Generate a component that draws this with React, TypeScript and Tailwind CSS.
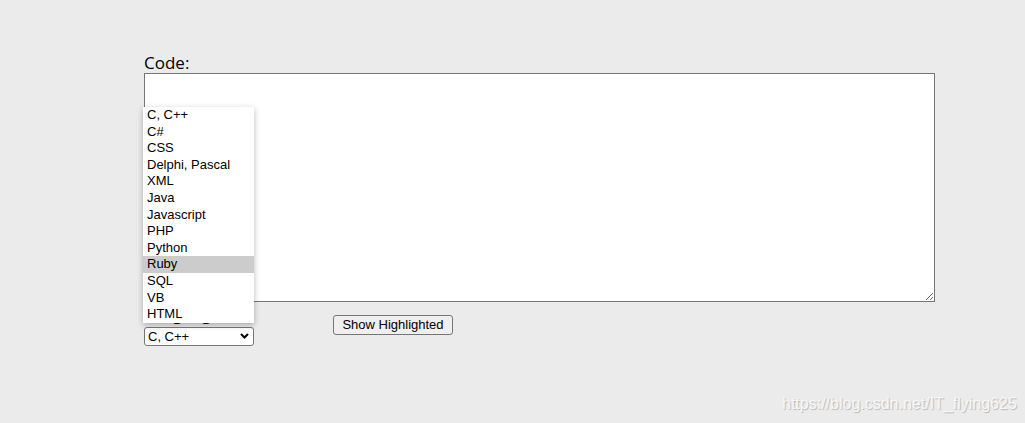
import React from "react";

const langs = [
  "C, C++",
  "C#",
  "CSS",
  "Delphi, Pascal",
  "XML",
  "Java",
  "Javascript",
  "PHP",
  "Python",
  "Ruby",
  "SQL",
  "VB",
  "HTML",
];

export default function App() {
  return (
    <div className="relative w-full min-h-[423px] overflow-hidden bg-[#ebebeb] text-black">
      <div className="relative pl-[144px] pt-[52px]">
        <label className="block text-[17px] leading-[21px] font-['Open_Sans',sans-serif]">
          Code:
        </label>
        <textarea className="block w-[791px] h-[229px] border border-[#767676] bg-white outline-none" />
        <div className="flex items-start">
          <div className="flex flex-col w-[110px]">
            <label className="block text-[17px] leading-[23px] font-['Open_Sans',sans-serif]">
              Language:
            </label>
            <div className="relative mt-[2px] w-[110px] h-[19px]">
              <select
                defaultValue="C, C++"
                className="block appearance-none w-[110px] h-[19px] border border-[#767676] rounded-[3px] bg-white pl-[3px] py-0 text-[13px] leading-[17px] font-['Liberation_Sans',Arial,sans-serif] text-black outline-none"
              >
                {langs.map((l) => (
                  <option key={l}>{l}</option>
                ))}
              </select>
              <svg
                className="pointer-events-none absolute left-[96px] top-[6px]"
                width="9"
                height="6"
                viewBox="0 0 9 6"
              >
                <polyline
                  points="1,1 4.5,4.5 8,1"
                  fill="none"
                  stroke="#000"
                  strokeWidth="2"
                />
              </svg>
            </div>
          </div>
          <button className="ml-[79px] mt-[13px] w-[120px] h-[20px] border border-[#767676] rounded-[3px] bg-[#efefef] text-[13px] leading-[16px] font-['Liberation_Sans',Arial,sans-serif] text-black">
            Show Highlighted
          </button>
        </div>

        <ul className="absolute left-[143px] top-[107px] w-[111px] bg-white shadow-[0_2px_6px_rgba(0,0,0,0.28)] font-['Liberation_Sans',Arial,sans-serif] text-[13px]">
          {langs.map((l) => (
            <li
              key={l}
              className={
                l === "Ruby"
                  ? "h-[16.6px] leading-[16px] pl-[4px] bg-[#cccccc] whitespace-nowrap"
                  : "h-[16.6px] leading-[16px] pl-[4px] whitespace-nowrap"
              }
            >
              {l}
            </li>
          ))}
        </ul>
      </div>

      <div className="absolute left-[782px] top-[395px] text-[16px] leading-[18px] font-['Liberation_Sans',Arial,sans-serif] text-[#f7f7f7] [text-shadow:1px_1px_1px_rgba(0,0,0,0.22)] whitespace-nowrap">
        https://blog.csdn.net/IT_flying625
      </div>
    </div>
  );
}
